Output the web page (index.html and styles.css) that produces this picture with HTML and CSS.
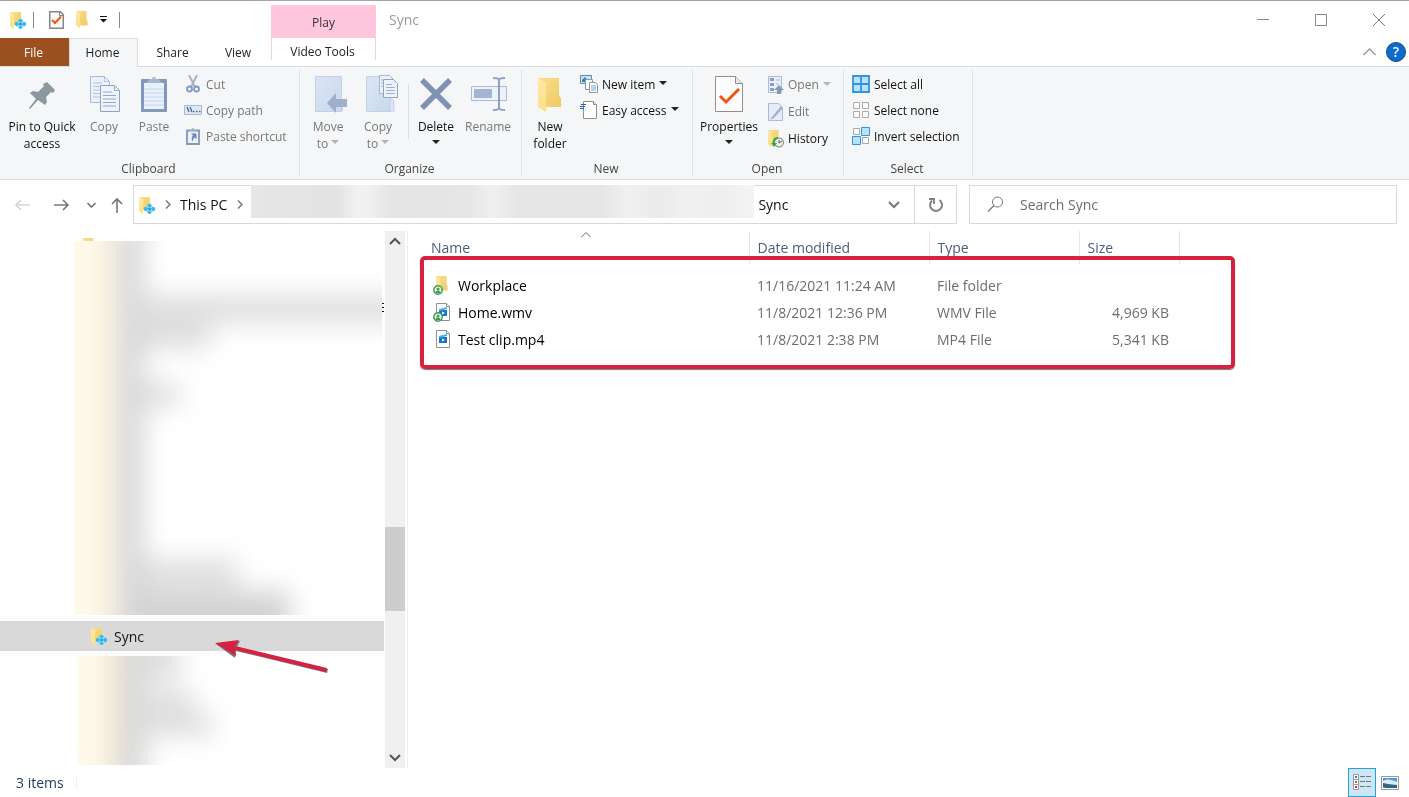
FILE: index.html
```html
<!DOCTYPE html>
<html lang="en">
<head>
    <meta charset="UTF-8">
    <meta name="viewport" content="width=device-width, initial-scale=1.0">
    <title>Sync</title>
    <link rel="stylesheet" href="styles.css">
</head>
<body>
    <!-- Shared icons -->
    <svg class="icon-defs" aria-hidden="true">
        <defs>
            <linearGradient id="fold" x1="0" y1="0" x2="1" y2="1">
                <stop offset="0" stop-color="#fbe08a"/>
                <stop offset="1" stop-color="#edc964"/>
            </linearGradient>
            <linearGradient id="flap" x1="0" y1="0" x2="0" y2="1">
                <stop offset="0" stop-color="#ffe9a6"/>
                <stop offset="1" stop-color="#fddf85"/>
            </linearGradient>
            <linearGradient id="sheet" x1="0" y1="0" x2="1" y2="1">
                <stop offset="0" stop-color="#dbe6f4"/>
                <stop offset="1" stop-color="#c9d8ec"/>
            </linearGradient>
            <symbol id="folder" viewBox="0 0 24 34">
                <path d="M1 0h20v18l2 2v9H1z" fill="url(#fold)"/>
                <path d="M0 0l8 5v29l-8-5z" fill="url(#flap)"/>
            </symbol>
            <symbol id="sync-folder" viewBox="0 0 17 18">
                <path d="M1 1h10v13H1z" fill="url(#fold)"/>
                <path d="M0 1l4 3v14l-4-3z" fill="url(#flap)"/>
                <g fill="#3fb9ee">
                    <circle cx="10.500" cy="10" r="2.200"/>
                    <circle cx="10.500" cy="16" r="2"/>
                    <circle cx="7" cy="13" r="2.200"/>
                    <circle cx="14" cy="13" r="2.200"/>
                    <path d="M10.500 8l5 5-5 5-5-5z"/>
                </g>
                <g fill="#a9e6fb">
                    <circle cx="8.800" cy="11.300" r=".9"/>
                    <circle cx="12.200" cy="11.300" r=".9"/>
                    <circle cx="8.800" cy="14.700" r=".9"/>
                    <circle cx="12.200" cy="14.700" r=".9"/>
                </g>
                <circle cx="10.500" cy="13" r=".8" fill="#0f7fc9"/>
            </symbol>
            <symbol id="doc-check" viewBox="0 0 28 36">
                <path d="M.5.5h20l7 7v28H.5z" fill="#fcfcfc" stroke="#8f8f8f"/>
                <path d="M20.500.5v7h7" fill="#e8e8e8" stroke="#8f8f8f"/>
                <path d="M5 20l6 6L24 13" fill="none" stroke="#f0560f" stroke-width="3"/>
            </symbol>
            <symbol id="doc-check-small" viewBox="0 0 15 18">
                <path d="M.75.75h10.500l3 3v13.500H.75z" fill="#fcfcfc" stroke="#858585" stroke-width="1.500"/>
                <path d="M10.500 1v3.500H14" fill="none" stroke="#858585"/>
                <path d="M3 9l3 3 6-6.500" fill="none" stroke="#f0560f" stroke-width="2"/>
            </symbol>
            <symbol id="video-file" viewBox="0 0 16 18">
                <path d="M1.500.5h10l3 3v14h-13z" fill="#fff" stroke="#8e9296"/>
                <path d="M11.500.5v3h3" fill="#eee" stroke="#8e9296"/>
                <path d="M4 7h8v6H4z" fill="#1576c8"/>
                <path d="M4 6l8-2v2L4 8z" fill="#42b4ee"/>
                <path d="M7 8.500v3l3-1.500z" fill="#fff"/>
            </symbol>
            <symbol id="shared" viewBox="0 0 10 10">
                <circle cx="5" cy="5" r="4.200" fill="#e9f7ec" stroke="#459a58" stroke-width="1.500"/>
                <circle cx="5" cy="4" r="1.500" fill="#459a58"/>
                <path d="M2.500 8a2.500 2.500 0 0 1 5 0z" fill="#459a58"/>
            </symbol>
        </defs>
    </svg>

    <div class="window">
        <header class="titlebar">
            <div class="quick-access">
                <svg class="i-sync" width="17" height="18"><use href="#sync-folder"/></svg>
                <span class="qa-line"></span>
                <button class="bare" aria-label="Properties"><svg width="15" height="18"><use href="#doc-check-small"/></svg></button>
                <button class="bare" aria-label="New folder"><svg width="12" height="17"><use href="#folder"/></svg></button>
                <button class="bare" aria-label="Customize Quick Access Toolbar"><svg width="7" height="7" viewBox="0 0 7 7"><path d="M0 0h7v1H0zM0 3h7L3.500 6.500z" fill="#111"/></svg></button>
                <span class="qa-line"></span>
            </div>
            <div class="context-title">Play</div>
            <div class="window-title">Sync</div>
            <div class="window-buttons">
                <button class="bare" aria-label="Minimize"><svg width="12" height="12" viewBox="0 0 12 12"><path d="M0 5.500h12" stroke="#888"/></svg></button>
                <button class="bare" aria-label="Maximize"><svg width="12" height="12" viewBox="0 0 12 12"><path d="M.5.5h11v11H.5z" fill="none" stroke="#888"/></svg></button>
                <button class="bare" aria-label="Close"><svg width="12" height="12" viewBox="0 0 12 12"><path d="M0 0l12 12M12 0L0 12" stroke="#777"/></svg></button>
            </div>
        </header>

        <nav class="tabs">
            <button class="tab file">File</button>
            <button class="tab active">Home</button>
            <button class="tab">Share</button>
            <button class="tab view">View</button>
            <button class="tab context">Video Tools</button>
            <div class="tab-tools">
                <button class="bare" aria-label="Collapse ribbon"><svg width="13" height="8" viewBox="0 0 13 8"><path d="M.5 7l6-6 6 6" fill="none" stroke="#999" stroke-width="1.300"/></svg></button>
                <button class="help" aria-label="Help">?</button>
            </div>
        </nav>

        <section class="ribbon">
            <div class="group clipboard">
                <div class="group-body">
                    <button class="big pin">
                        <svg width="38" height="38" viewBox="0 0 38 38"><path d="M24 7l8 8-2 3-2-1-5 5 1 5-2 3-7-5-8 9-1-1 7-9-6-6 3-2 5 1 6-6-1-2z" fill="#8c979e"/></svg>
                        Pin to Quick<br>access
                    </button>
                    <button class="big copy" disabled>
                        <svg width="32" height="38" viewBox="0 0 32 38">
                            <path d="M2.500 1.500h14l5 5v21h-19z" fill="#eaf1fb" stroke="#a9bad4"/>
                            <path d="M16.500 1.500v5h5M5 8h9M5 11.500h13M5 15h13M5 18.500h13M5 22h13" fill="none" stroke="#b4c4dc"/>
                            <path d="M12.500 10.500h14l5 5v21h-19z" fill="#eef4fc" stroke="#8fa3c4"/>
                            <path d="M26.500 10.500v5h5M15 17h9M15 20.500h13M15 24h13M15 27.500h13M15 31h13" fill="none" stroke="#94a8c8"/>
                        </svg>
                        Copy
                    </button>
                    <button class="big paste" disabled>
                        <svg width="26" height="38" viewBox="1 0 26 38">
                            <rect x="1" y="4" width="26" height="33" rx="1" fill="#8598ba"/>
                            <path d="M4 8h20v26H4z" fill="#e9f1fc"/>
                            <path d="M4 14h20M4 18h20M4 22h20M4 26h20M4 30h20" stroke="#c6d4ea"/>
                            <path d="M6 8l4-4h2a2 2 0 0 1 4 0h2l4 4z" fill="#a8b8d2"/>
                        </svg>
                        Paste
                    </button>
                    <div class="smalls">
                        <button class="small" disabled><svg width="18" height="18" viewBox="0 0 18 18"><path d="M5 0l6 12M13 0L7 12" stroke="#a5b4cd" stroke-width="2"/><circle cx="5.500" cy="14" r="2.500" fill="none" stroke="#8398bf" stroke-width="1.800"/><circle cx="12.500" cy="14" r="2.500" fill="none" stroke="#8398bf" stroke-width="1.800"/></svg>Cut</button>
                        <button class="small" disabled><svg width="18" height="18" viewBox="0 0 18 18"><path d="M.5 4.500h17v9H.5z" fill="#dfe8f5" stroke="#a9bad4"/><path d="M3 6l2 5M6 6l2 5M9 10.500h1.500M12 10.500h1.500M15 10.500h1.500" stroke="#4c6289" stroke-width="1.300"/></svg>Copy path</button>
                        <button class="small" disabled><svg width="18" height="18" viewBox="0 0 18 18"><path d="M3 3.500h12v13.500H3z" fill="#e9f1fc" stroke="#8598ba" stroke-width="1.800"/><path d="M5 4l3-2a1 1 0 0 1 2 0l3 2z" fill="#a0b0cb"/><path d="M7 6.500h5.500V12l-2-1.500c-1.500 1-1.500 2.500-1.500 4-2-2-1.500-4.500 0-6z" fill="#6f86b0"/></svg>Paste shortcut</button>
                    </div>
                </div>
                <div class="group-name">Clipboard</div>
            </div>

            <div class="group organize">
                <div class="group-body">
                    <button class="big" disabled>
                        <svg width="38" height="38" viewBox="-4 0 38 38">
                            <path d="M2.500 1.500h26v35h-26z" fill="url(#sheet)" stroke="#c0d0e6"/>
                            <path d="M28 25v11h2V25z" fill="#c0d0e6"/>
                            <path d="M14 28l9-10v6h11v8H23v6z" fill="#a0b0cc"/>
                        </svg>
                        Move<br>to <i class="caret"></i>
                    </button>
                    <button class="big" disabled>
                        <svg width="40" height="38" viewBox="-4 0 40 38">
                            <path d="M4.500 1.500h24v35h-24z" fill="url(#sheet)" stroke="#c0d0e6"/>
                            <path d="M28 36V26l2-2 2 2v10z" fill="#dbe6f4" stroke="#c0d0e6"/>
                            <path d="M17.500.5h10l4 4v14h-14z" fill="#edf3fb" stroke="#a5b7d3"/>
                            <path d="M22.500 4.500h10l4 4v14h-14z" fill="#edf3fb" stroke="#8fa3c4" transform="translate(-1 0)"/>
                            <path d="M24 9.500h6M24 12.500h9M24 15.500h9M24 18.500h9M19 5h2M19 8h2M19 11h2" stroke="#9dafcd"/>
                        </svg>
                        Copy<br>to <i class="caret"></i>
                    </button>
                    <span class="divider"></span>
                    <button class="big delete">
                        <svg width="34" height="38" viewBox="0 0 34 38"><path d="M3 5l28 28M31 5L3 33" stroke="#8092b4" stroke-width="5.500"/></svg>
                        Delete<br><i class="caret"></i>
                    </button>
                    <button class="big" disabled>
                        <svg width="40" height="38" viewBox="-2 0 40 38">
                            <path d="M1.500 11.500h35v14h-35z" fill="#edf3fb" stroke="#a9bad4"/>
                            <path d="M4 14h18v9H4z" fill="#a5b4d0"/>
                            <path d="M29 5v28M23 3c4 0 6 0 6 3 0-3 2-3 6-3M23 35c4 0 6 0 6-3 0 3 2 3 6 3" fill="none" stroke="#8fa1c2" stroke-width="2"/>
                        </svg>
                        Rename
                    </button>
                </div>
                <div class="group-name">Organize</div>
            </div>

            <div class="group new">
                <div class="group-body">
                    <button class="big new-folder">
                        <svg width="24" height="38"><use href="#folder" y="3" width="24" height="34"/></svg>
                        New<br>folder
                    </button>
                    <div class="smalls">
                        <button class="small"><svg width="18" height="18" viewBox="0 0 18 18"><path d="M.5.5h11v8H.5z" fill="#c7e7f7" stroke="#5b8fae"/><path d="M2 5l3-3 4 5H2z" fill="#3a7fa8"/><path d="M5.500 4.500h7v10h-7z" fill="#fff" stroke="#8d9aa5"/><path d="M9.500 7.500h6l2 2v8h-8z" fill="#fff" stroke="#8d9aa5"/><path d="M11 11h5M11 13h5M11 15h5" stroke="#73a7d5"/></svg>New item <i class="caret"></i></button>
                        <button class="small"><svg width="18" height="18" viewBox="0 0 18 18"><path d="M3.500.5h10l3 3v14h-13z" fill="#fff" stroke="#8f8f8f"/><path d="M13.500.5v3h3" fill="#eee" stroke="#8f8f8f"/><path d="M1 3.500h5M0 5.500h5M-1 7.500h5" stroke="#1c63b5" stroke-width="1.200"/></svg>Easy access <i class="caret"></i></button>
                    </div>
                </div>
                <div class="group-name">New</div>
            </div>

            <div class="group open">
                <div class="group-body">
                    <button class="big properties">
                        <svg width="30" height="38" viewBox="0 0 30 38"><use href="#doc-check" x="1" y="1" width="28" height="36"/></svg>
                        Properties<br><i class="caret"></i>
                    </button>
                    <div class="smalls">
                        <button class="small" disabled><svg width="16" height="18" viewBox="0 0 16 18"><path d="M.5.5h13v16H.5z" fill="#e9f1fc" stroke="#a9bad4"/><path d="M2 2h4v3H2zM2 7h4v3H2zM2 12h4v3H2z" fill="#8a9dc0"/><path d="M8 4h4M8 8h3" stroke="#a9bad4"/><path d="M11 9l5 5h-3v4H9v-4H6z" fill="#8598ba"/></svg>Open <i class="caret"></i></button>
                        <button class="small" disabled><svg width="16" height="18" viewBox="0 0 16 18"><path d="M.5.5h10l4 4v13H.5z" fill="#e4edf9" stroke="#a9bad4"/><path d="M4 14l9-11 2 2-9 10-4 2z" fill="#a2b3d0"/></svg>Edit</button>
                        <button class="small"><svg width="16" height="18" viewBox="0 0 16 18"><use href="#folder" width="12" height="17"/><circle cx="11" cy="12.500" r="4.500" fill="#eee" stroke="#777"/><path d="M11 10v3l3-2" fill="none" stroke="#555"/><path d="M10 8c-4 0-5 3-4 6" fill="none" stroke="#2fae3a" stroke-width="2"/><path d="M3 13h6l-3 4z" fill="#2fae3a"/></svg>History</button>
                    </div>
                </div>
                <div class="group-name">Open</div>
            </div>

            <div class="group select">
                <div class="group-body">
                    <div class="smalls">
                        <button class="small"><svg width="18" height="18" viewBox="0 0 18 18"><path d="M1 1h16v16H1zM9 1v16M1 9h16" fill="#b9e2fd" stroke="#3194e0" stroke-width="1.800"/></svg>Select all</button>
                        <button class="small"><svg width="18" height="18" viewBox="0 0 18 18"><path d="M1.500 1.500h6v6h-6zM10.500 1.500h6v6h-6zM1.500 10.500h6v6h-6zM10.500 10.500h6v6h-6z" fill="#fdfdfd" stroke="#aaa"/></svg>Select none</button>
                        <button class="small"><svg width="18" height="18" viewBox="0 0 18 18"><path d="M1.500 1.500h6v6h-6zM10.500 10.500h6v6h-6z" fill="#fdfdfd" stroke="#aaa"/><path d="M9.500.5h8v8h-8zM.5 9.500h8v8h-8z" fill="#b9e2fd" stroke="#3194e0"/></svg>Invert selection</button>
                    </div>
                </div>
                <div class="group-name">Select</div>
            </div>
        </section>

        <div class="address-row">
            <div class="history-buttons">
                <button class="bare" aria-label="Back"><svg width="16" height="12" viewBox="0 0 16 12"><path d="M15 6H1M6 1L1 6l5 5" fill="none" stroke="#d6d6d6" stroke-width="1.600"/></svg></button>
                <button class="bare forward" aria-label="Forward"><svg width="16" height="12" viewBox="0 0 16 12"><path d="M0 6h14M9 1l5 5-5 5" fill="none" stroke="#777" stroke-width="1.600"/></svg></button>
                <button class="bare recent" aria-label="Recent locations"><svg width="9" height="6" viewBox="0 0 9 6"><path d="M.5 1l4 4 4-4" fill="none" stroke="#777" stroke-width="1.600"/></svg></button>
                <button class="bare up" aria-label="Up"><svg width="12" height="16" viewBox="0 0 12 16"><path d="M6 16V2M1 7l5-5 5 5" fill="none" stroke="#777" stroke-width="1.600"/></svg></button>
            </div>
            <div class="address">
                <svg class="i-sync" width="17" height="18"><use href="#sync-folder"/></svg>
                <svg class="crumb-arrow" width="6" height="9" viewBox="0 0 6 9"><path d="M1 .5l4 4-4 4" fill="none" stroke="#777" stroke-width="1.500"/></svg>
                <a href="#">This PC</a>
                <svg class="crumb-arrow last" width="6" height="9" viewBox="0 0 6 9"><path d="M1 .5l4 4-4 4" fill="none" stroke="#777" stroke-width="1.500"/></svg>
                <span class="hidden-path"></span>
                <a href="#">Sync</a>
                <button class="bare drop" aria-label="Previous locations"><svg width="12" height="8" viewBox="0 0 12 8"><path d="M1 1l5 5 5-5" fill="none" stroke="#777" stroke-width="2"/></svg></button>
                <button class="bare refresh" aria-label="Refresh"><svg width="16" height="16" viewBox="0 0 16 16"><path d="M4 3.500a6 6 0 1 0 7.500-.5" fill="none" stroke="#808080" stroke-width="2"/><path d="M1 2h5v5" fill="none" stroke="#808080" stroke-width="1.800"/></svg></button>
            </div>
            <label class="search">
                <svg width="17" height="17" viewBox="0 0 17 17"><circle cx="10.500" cy="6" r="5" fill="none" stroke="#777"/><path d="M7 9.500L1 15.500" stroke="#777" stroke-width="1.200"/></svg>
                <input type="text" placeholder="Search Sync" aria-label="Search Sync">
            </label>
        </div>

        <main class="content">
            <aside class="sidebar">
                <svg class="folder-edge" width="13" height="34"><use href="#folder" width="13" height="18"/></svg>
                <div class="veil first">
                    <svg width="310" height="374" viewBox="0 0 310 374">
                        <defs>
                            <filter id="soft" x="-30%" y="-30%" width="160%" height="160%" color-interpolation-filters="sRGB"><feGaussianBlur stdDeviation="13"/></filter>
                            <clipPath id="veil-area"><path d="M0 0h308v374H0z"/></clipPath>
                        </defs>
                        <g clip-path="url(#veil-area)">
                            <g filter="url(#soft)" fill="#dedede">
                                <path d="M44-40h26v455H44z" fill="#d6d6d6"/>
                                <path d="M60 54h300v28H60zM70 82h66v26H70zM70 142h36v24H70zM70 318h94v28H70z"/>
                                <path d="M60 350h156v50H60z" fill="#d2d2d2"/>
                            </g>
                        </g>
                        <path d="M308 62.500h2M308 66.500h2M308 70.500h2" stroke="#111"/>
                    </svg>
                </div>
                <div class="tree-row">
                    <svg class="i-sync" width="17" height="18"><use href="#sync-folder"/></svg>
                    <a href="#">Sync</a>
                    <svg class="pointer" width="118" height="40" viewBox="0 0 118 40">
                        <path d="M1 8l24-3-3 6 91 22-1 4-91-22-1 7z" fill="#777" transform="translate(1 1)"/>
                        <path d="M1 8l24-3-4 6 92 22-1 4-91-22 1 6z" fill="#d62142"/>
                    </svg>
                </div>
                <div class="veil second">
                    <svg width="304" height="109" viewBox="0 0 304 109">
                        <g filter="url(#soft)" fill="#dedede">
                            <path d="M40-40h28v190H40z" fill="#d6d6d6"/>
                            <path d="M60-20h42v44H60zM60 34h56v30H60zM60 58h76v22H60z"/>
                        </g>
                    </svg>
                </div>
            </aside>
            <div class="scrollbar">
                <svg width="12" height="8" viewBox="0 0 12 8"><path d="M1 7l5-5 5 5" fill="none" stroke="#555" stroke-width="2"/></svg>
                <span class="above"></span>
                <span class="thumb"></span>
                <span class="below"></span>
                <svg width="12" height="8" viewBox="0 0 12 8"><path d="M1 1l5 5 5-5" fill="none" stroke="#555" stroke-width="2"/></svg>
            </div>

            <section class="files">
                <svg class="sort" width="10" height="6" viewBox="0 0 10 6"><path d="M.5 5L5 .5 9.500 5" fill="none" stroke="#666"/></svg>
                <table>
                    <thead>
                        <tr><th class="name">Name</th><th class="date">Date modified</th><th class="type">Type</th><th class="size">Size</th></tr>
                    </thead>
                    <tbody>
                        <tr>
                            <td><span class="file-name"><svg width="18" height="20" viewBox="0 0 18 20"><use href="#folder" x="3" width="12" height="17"/><use href="#shared" y="9" width="10" height="10"/></svg>Workplace</span></td>
                            <td>11/16/2021 11:24 AM</td><td>File folder</td><td></td>
                        </tr>
                        <tr>
                            <td><span class="file-name"><svg width="18" height="20" viewBox="0 0 18 20"><use href="#video-file" x="2" width="16" height="18"/><use href="#shared" y="9" width="10" height="10"/></svg>Home.wmv</span></td>
                            <td>11/8/2021 12:36 PM</td><td>WMV File</td><td>4,969 KB</td>
                        </tr>
                        <tr>
                            <td><span class="file-name"><svg width="18" height="20" viewBox="0 0 18 20"><use href="#video-file" x="2" width="16" height="18"/></svg>Test clip.mp4</span></td>
                            <td>11/8/2021 2:38 PM</td><td>MP4 File</td><td>5,341 KB</td>
                        </tr>
                    </tbody>
                </table>
                <div class="highlight"></div>
            </section>
        </main>

        <footer class="status">
            <span class="count">3 items</span>
            <div class="views">
                <button class="bare details" aria-label="Details view"><svg width="19" height="17" viewBox="0 0 19 17"><path d="M.5.5h5v5h-5zM.5 5.500h5v5h-5zM.5 10.500h5v5h-5z" fill="#fff" stroke="#999"/><path d="M2 2h2v2H2z" fill="#2878b4"/><path d="M2 7h2v2H2z" fill="#8a7a3a"/><path d="M2 12h2v2H2z" fill="#d22"/><path d="M7 2.500h5M13 2.500h5M7 7.500h5M13 7.500h5M7 12.500h5M13 12.500h5" stroke="#777"/></svg></button>
                <button class="bare" aria-label="Large icons view"><svg width="18" height="14" viewBox="0 0 18 14"><path d="M.5.5h17v13H.5z" fill="#fff" stroke="#999"/><path d="M2 2h14v10H2z" fill="#4d94dc"/><path d="M2 5c5-3 9-1 14 1v3H2z" fill="#d8ecf9"/><path d="M2 7l5 1 9 1v2H2z" fill="#3a6b5c"/><path d="M5 10h11v2H4z" fill="#2c5ea8"/></svg></button>
            </div>
        </footer>
    </div>
</body>
</html>
```
FILE: styles.css
```css
* {
    box-sizing: border-box;
}
body {
    margin: 0;
    font-family: "Open Sans", "Noto Sans", sans-serif;
    font-size: 14px;
    color: #111;
    background: #fff;
}
button {
    font: inherit;
    color: inherit;
    background: none;
    border: none;
    padding: 0;
    margin: 0;
}
a {
    color: inherit;
    text-decoration: none;
}
svg {
    display: block;
    flex-shrink: 0;
}
.icon-defs {
    position: absolute;
    width: 0;
    height: 0;
}
.bare {
    display: flex;
    align-items: center;
    justify-content: center;
}
.window {
    display: flex;
    flex-direction: column;
    height: 100vh;
    border-top: 1px solid #a3a3a3;
    overflow: hidden;
}

/* Title bar */
.titlebar {
    display: flex;
    height: 37px;
}
.quick-access {
    display: flex;
    align-items: center;
    gap: 12px;
    width: 271px;
    padding-left: 10px;
}
.qa-line {
    width: 1px;
    height: 16px;
    background: #888;
}
.quick-access .i-sync {
    margin-right: -6px;
}
.quick-access .qa-line:nth-child(2) {
    margin-right: 3px;
}
.context-title {
    width: 105px;
    margin-top: 4px;
    background: #ffc6de;
    font-size: 12px;
    line-height: 35px;
    text-align: center;
    color: #333;
}
.window-title {
    padding-left: 13px;
    line-height: 37px;
    color: #999;
}
.window-buttons {
    display: flex;
    margin-left: auto;
    padding-right: 1px;
}
.window-buttons button {
    width: 58px;
}

/* Tabs */
.tabs {
    display: flex;
    height: 29px;
    border-bottom: 1px solid #dadbdc;
    font-size: 12px;
    color: #222;
}
.tab {
    width: 69px;
    height: 28px;
    padding-right: 2px;
}
.tab.file {
    background: #9a501f;
    color: #fff;
}
.tab.active {
    height: 29px;
    padding-bottom: 2px;
    background: #f5f6f7;
    border: 1px solid #dadbdc;
    border-bottom: none;
}
.tab:nth-child(3) {
    padding-right: 0;
}
.tab.view {
    width: 64px;
}
.tab.context {
    width: 105px;
    height: 22px;
    padding-top: 6px;
    line-height: 16px;
    border: solid #dcdcdc;
    border-width: 0 1px;
}
.tab-tools {
    display: flex;
    align-items: center;
    gap: 10px;
    margin-left: auto;
    padding-right: 3px;
}
.help {
    width: 20px;
    height: 20px;
    border-radius: 50%;
    border: 1px solid #124a86;
    background: #0b6ccb;
    color: #fff;
    font-size: 14px;
    font-weight: 600;
    line-height: 18px;
}

/* Ribbon */
.ribbon {
    display: flex;
    height: 113px;
    padding-top: 3px;
    background: #f5f6f7;
    border-bottom: 1px solid #dadbdc;
    font-size: 12px;
    line-height: 17px;
}
.group {
    display: flex;
    flex-direction: column;
    height: 106px;
    border-right: 1px solid #e2e3e4;
}
.group-body {
    display: flex;
    flex: 1;
    padding-top: 5px;
}
.group-name {
    height: 16px;
    padding-right: 2px;
    text-align: center;
    color: #444;
}
.clipboard {
    width: 300px;
}
.organize {
    width: 222px;
}
.new {
    width: 171px;
}
.open {
    width: 151px;
}
.select {
    width: 129px;
}
.big {
    display: block;
    width: 50px;
    text-align: center;
    align-self: flex-start;
    white-space: nowrap;
}
.big svg {
    margin: 0 auto 5px;
}
.big:disabled,
.small:disabled {
    color: #777;
}
.pin {
    width: 84px;
}
.copy {
    width: 40px;
}
.paste {
    width: 60px;
}
.delete {
    width: 54px;
}
.properties {
    width: 66px;
}
.organize .group-body,
.new .group-body,
.open .group-body {
    padding-left: 3px;
}
.divider {
    width: 1px;
    height: 55px;
    margin: 9px 0 0 5px;
    background: #dcdddf;
}
.smalls {
    display: flex;
    flex-direction: column;
    margin-top: -4px;
}
.small {
    display: flex;
    align-items: center;
    gap: 4px;
    height: 26px;
    white-space: nowrap;
}
.new .smalls {
    padding-left: 5px;
}
.open .smalls {
    padding-left: 6px;
}
.open .small {
    height: 27px;
}
.select .smalls {
    padding-left: 8px;
}
.caret {
    display: inline-block;
    border: 4px solid transparent;
    border-top-color: #222;
    border-bottom: none;
    vertical-align: middle;
}
.big .caret {
    margin-bottom: 6px;
}
.small .caret {
    margin-bottom: 2px;
}
button:disabled .caret {
    border-top-color: #b5b5b5;
}

/* Address row */
.address-row {
    display: flex;
    align-items: center;
    padding: 5px 12px 7px 15px;
    height: 51px;
}
.history-buttons {
    display: flex;
    align-items: center;
    width: 118px;
    flex-shrink: 0;
}
.forward {
    margin-left: 23px;
}
.recent {
    margin-left: 17px;
}
.up {
    margin-left: 15px;
}
.address {
    display: flex;
    align-items: center;
    flex: 1;
    height: 39px;
    border: 1px solid #d9d9d9;
    padding-left: 5px;
}
.crumb-arrow {
    margin: 0 9px;
}
.crumb-arrow.last {
    margin-left: 10px;
    margin-right: 8px;
}
.hidden-path {
    align-self: flex-start;
    width: 503px;
    height: 33px;
    margin-top: -1px;
    margin-right: 4px;
    background: linear-gradient(90deg, #e6e6e6, #e3e3e3 17%, #f1f1f1 21%, #f1f1f1 23%, #e4e4e4 28%, #e6e6e6 43%, #efefef 48%, #e6e6e6 53%, #e6e6e6 70%, #f0f0f0 75%, #ebebeb 81%, #f1f1f1 87%, #eeeeee 93%, #f4f4f4);
}
.drop {
    width: 40px;
    height: 37px;
    margin-left: auto;
}
.refresh {
    width: 42px;
    height: 37px;
    border-left: 1px solid #d9d9d9;
}
.search {
    display: flex;
    align-items: center;
    gap: 16px;
    width: 428px;
    height: 39px;
    margin-left: 12px;
    padding-left: 17px;
    border: 1px solid #d9d9d9;
}
.search input {
    flex: 1;
    border: none;
    outline: none;
    padding: 0;
    font: inherit;
    background: none;
}
.search input::placeholder {
    color: #6d6d6d;
    opacity: 1;
}

/* Folder tree */
.content {
    display: flex;
    flex: 1;
    min-height: 0;
}
.sidebar {
    width: 384px;
    flex-shrink: 0;
    padding-top: 7px;
}
.folder-edge {
    height: 3px;
    margin-left: 82px;
    overflow: hidden;
}
.veil {
    overflow: hidden;
    background: linear-gradient(90deg, #fef9ea, #fef8e8 18px, #fdf5e6 28px, #fff 60px);
}
.veil svg {
    mix-blend-mode: multiply;
}
.first {
    width: 310px;
    margin-left: 74px;
}
.second {
    width: 304px;
    margin-left: 78px;
}
.tree-row {
    position: relative;
    display: flex;
    align-items: center;
    gap: 6px;
    height: 30px;
    margin: 6px 0 5px;
    padding-left: 91px;
    background: #d9d9d9;
}
.pointer {
    position: absolute;
    top: 14px;
    left: 214px;
    z-index: 1;
}
.scrollbar {
    display: flex;
    flex-direction: column;
    align-items: center;
    width: 20px;
    margin-left: 1px;
    padding: 6px 0;
    background: #f0f0f0;
}
.above {
    flex: 281;
}
.thumb {
    flex: 84;
    width: 20px;
    background: #cdcdcd;
}
.below {
    flex: 142;
}

/* File list */
.files {
    position: relative;
    flex: 1;
    margin-left: 2px;
    padding-left: 15px;
    border-left: 1px solid #f0f0f0;
}
.sort {
    position: absolute;
    top: 1px;
    left: 173px;
}
table {
    border-collapse: collapse;
    table-layout: fixed;
    width: 756px;
    color: #6d6d6d;
}
th {
    height: 33px;
    padding: 0 8px;
    border-right: 1px solid #e5e5e5;
    font-weight: normal;
    text-align: left;
    color: #4c607a;
}
thead::after {
    content: "";
    display: block;
    height: 8px;
}
.name {
    width: 326px;
}
.date {
    width: 180px;
}
.type {
    width: 150px;
}
.size {
    width: 100px;
}
td {
    height: 27px;
    padding: 0 8px;
    white-space: nowrap;
}
td:last-child {
    padding-right: 10px;
    text-align: right;
}
.file-name {
    display: flex;
    align-items: center;
    gap: 7px;
    margin-left: 2px;
    color: #000;
}
.highlight {
    position: absolute;
    top: 25px;
    left: 12px;
    width: 815px;
    height: 113px;
    border: 4px solid #d9203f;
    border-radius: 5px;
    box-shadow: 0 1px 1px #777;
}

/* Status bar */
.status {
    display: flex;
    height: 29px;
    padding-right: 10px;
    color: #1e395b;
}
.count {
    align-self: center;
    padding: 0 12px 0 16px;
    line-height: 13px;
    border-right: 1px solid #f0f0f0;
}
.views {
    display: flex;
    gap: 5px;
    margin-left: auto;
}
.details {
    width: 28px;
    background: #cce8f6;
    border: 1px solid #26a0da;
}
```
